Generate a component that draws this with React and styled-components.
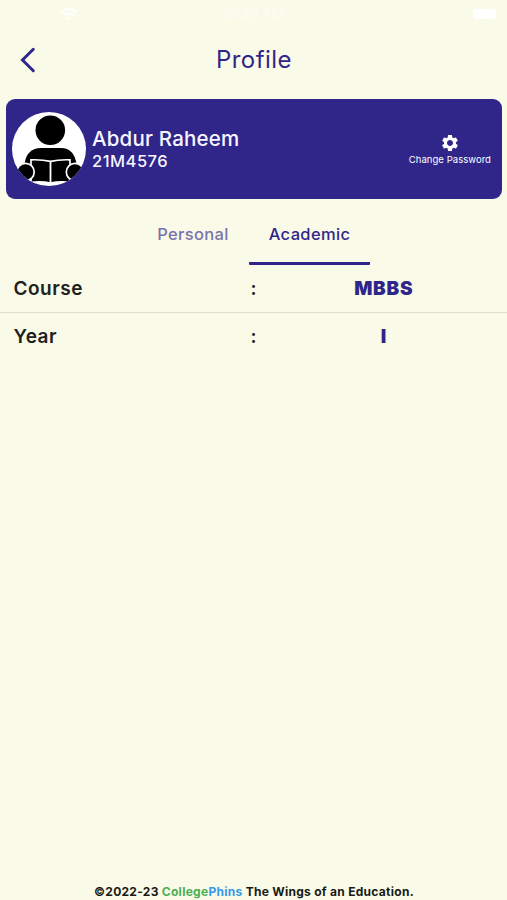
import React from "react";
import styled, { createGlobalStyle } from "styled-components";

const GlobalStyle = createGlobalStyle`
  * {
    box-sizing: border-box;
  }

  body {
    margin: 0;
    background: #f9fae7;
    color: #20211c;
    font-family: Inter, "Liberation Sans", sans-serif;
  }
`;

const Screen = styled.div`
  display: flex;
  flex-direction: column;
  height: 900px;
  overflow: hidden;
`;

const StatusBar = styled.div`
  display: grid;
  grid-template-columns: 1fr auto 1fr;
  align-items: center;
  height: 27px;
  padding: 0 11px;
  color: #fdfdf5;
  font-size: 14px;
`;

const Carrier = styled.div`
  display: flex;
  align-items: center;
  gap: 6px;
  font-size: 13px;
  color: #fbfbee;
`;

const Battery = styled.div`
  justify-self: end;
  width: 23px;
  height: 10px;
  border-radius: 3px;
  background: #fff;
`;

const Header = styled.header`
  display: grid;
  grid-template-columns: 60px 1fr 60px;
  align-items: center;
  height: 65px;
`;

const BackButton = styled.button`
  display: flex;
  padding: 0 0 0 20px;
  border: 0;
  background: none;
`;

const Title = styled.h1`
  margin: 0;
  padding-left: 1px;
  color: #30268a;
  font-size: 24px;
  font-weight: 400;
  line-height: 30px;
  letter-spacing: 0.45px;
  text-align: center;
`;

const Card = styled.section`
  display: flex;
  align-items: center;
  height: 100px;
  margin: 6.6px 5px 0 6px;
  padding: 0 11px 0 6px;
  border-radius: 9px;
  background: #30268a;
  color: #f7f5ff;
`;

const Identity = styled.div`
  flex: 1;
  margin-left: 6px;
`;

const Name = styled.div`
  font-size: 20.5px;
  font-weight: 500;
  line-height: 24px;
  letter-spacing: 0.2px;
`;

const RollNumber = styled.div`
  font-size: 16.5px;
  font-weight: 500;
  line-height: 20px;
  letter-spacing: 0.5px;
`;

const PasswordButton = styled.button`
  display: flex;
  flex-direction: column;
  align-items: center;
  padding: 2px 0 0;
  border: 0;
  background: none;
  color: #fff;
  font: 400 9.5px/14px Inter, sans-serif;
  letter-spacing: 0.05px;
`;

const Tabs = styled.nav`
  display: flex;
  justify-content: center;
  height: 66.4px;
`;

const Tab = styled.button`
  width: ${(props) => props.$width}px;
  padding: 7px 0 0;
  border: 0;
  border-bottom: 3px solid ${(props) => (props.$active ? "#30268a" : "transparent")};
  border-radius: 1px;
  background: none;
  color: ${(props) => (props.$active ? "#30268a" : "#7a73ad")};
  font: 500 16.5px/20px Inter, sans-serif;
  letter-spacing: 0.35px;
`;

const Row = styled.div`
  display: grid;
  grid-template-columns: 237px 10px 1fr;
  align-items: center;
  height: ${(props) => (props.$last ? "47px" : "48px")};
  padding: 0 0 0 13.5px;
  border-bottom: ${(props) => (props.$last ? "0" : "1px solid #dcddcb")};
  font-size: 19px;
  font-weight: 600;
  letter-spacing: 0.5px;
`;

const Value = styled.span`
  color: #30268a;
  font-weight: 900;
  letter-spacing: 0.7px;
  text-align: center;
`;

const Footer = styled.footer`
  margin-top: auto;
  padding: 0 0 1px 1px;
  color: #191a16;
  font-size: 12px;
  font-weight: 700;
  line-height: 15px;
  letter-spacing: 0.28px;
  text-align: center;
`;

const College = styled.span`
  color: #4caf50;
`;

const Phins = styled.span`
  color: #359be8;
`;

const rows = [
  { label: "Course", value: "MBBS" },
  { label: "Year", value: "I" },
];

function WifiIcon() {
  return (
    <svg width="18" height="14" viewBox="0 0 18 14" fill="none" stroke="#fefefa" strokeWidth="2.8">
      <path d="M1 5Q9-1 17 5M4 8.5Q9 4.5 14 8.5" />
      <path d="M6.5 11.2Q9 9.4 11.5 11.2L9 13.5Z" fill="#fefefa" stroke="none" />
    </svg>
  );
}

function Avatar() {
  return (
    <svg width="74" height="74" viewBox="0 0 74 74">
      <defs>
        <clipPath id="avatar-circle">
          <circle cx="37" cy="37" r="37" />
        </clipPath>
      </defs>
      <g clipPath="url(#avatar-circle)">
        <rect width="74" height="74" fill="#fff" />
        <circle cx="38.3" cy="18.3" r="14.8" />
        <path d="M12.5 52C14 41 20 36 29 36H49C58 36 63 42 64.5 52L56 58H21Z" />
        <path
          d="M19 47.8Q30 47.4 38.5 49.3Q47 47.4 58 47.8V70.3Q47 69.3 38.5 71Q30 69.3 19 70.3Z"
          stroke="#fff"
          strokeWidth="1.7"
        />
        <path d="M38.5 49.5V71" stroke="#fff" strokeWidth="1.8" />
        {/* hands holding the book */}
        <circle cx="13.5" cy="60" r="8.7" stroke="#fff" strokeWidth="1.7" />
        <circle cx="63" cy="60" r="8.7" stroke="#fff" strokeWidth="1.7" />
      </g>
    </svg>
  );
}

function GearIcon() {
  return (
    <svg width="20" height="20" viewBox="0 0 24 24" fill="currentColor">
      <path d="M19.14 12.94c.04-.3.06-.61.06-.94 0-.32-.02-.64-.07-.94l2.03-1.58a.49.49 0 0 0 .12-.61l-1.92-3.32a.488.488 0 0 0-.59-.22l-2.39.96c-.5-.38-1.03-.7-1.62-.94l-.36-2.54a.484.484 0 0 0-.48-.41h-3.84c-.24 0-.43.17-.47.41l-.36 2.54c-.59.24-1.13.57-1.62.94l-2.39-.96c-.22-.08-.47 0-.59.22L2.74 8.87c-.12.21-.08.47.12.61l2.03 1.58c-.05.3-.09.63-.09.94s.02.64.07.94l-2.03 1.58a.49.49 0 0 0-.12.61l1.92 3.32c.12.22.37.29.59.22l2.39-.96c.5.38 1.03.7 1.62.94l.36 2.54c.05.24.24.41.48.41h3.84c.24 0 .44-.17.47-.41l.36-2.54c.59-.24 1.13-.56 1.62-.94l2.39.96c.22.08.47 0 .59-.22l1.92-3.32c.12-.22.07-.47-.12-.61l-2.01-1.58zM12 15.6c-1.98 0-3.6-1.62-3.6-3.6s1.62-3.6 3.6-3.6 3.6 1.62 3.6 3.6-1.62 3.6-3.6 3.6z" />
    </svg>
  );
}

function App() {
  return (
    <Screen>
      <GlobalStyle />
      <StatusBar>
        <Carrier>
          Carrier <WifiIcon />
        </Carrier>
        <span>10:20 AM</span>
        <Battery />
      </StatusBar>
      <Header>
        <BackButton aria-label="Back">
          <svg width="16" height="26" viewBox="0 0 16 26" fill="none" stroke="#30268a" strokeWidth="3">
            <path d="M13.3 2.3L2.5 13L13.3 23.7" strokeLinecap="round" />
          </svg>
        </BackButton>
        <Title>Profile</Title>
      </Header>
      <Card>
        <Avatar />
        <Identity>
          <Name>Abdur Raheem</Name>
          <RollNumber>21M4576</RollNumber>
        </Identity>
        <PasswordButton>
          <GearIcon />
          Change Password
        </PasswordButton>
      </Card>
      <Tabs>
        <Tab $width={112}>Personal</Tab>
        <Tab $width={121} $active>
          Academic
        </Tab>
      </Tabs>
      {rows.map((row, index) => (
        <Row key={row.label} $last={index === rows.length - 1}>
          <span>{row.label}</span>
          <span>:</span>
          <Value>{row.value}</Value>
        </Row>
      ))}
      <Footer>
        ©2022-23 <College>College</College>
        <Phins>Phins</Phins> The Wings of an Education.
      </Footer>
    </Screen>
  );
}

export default App;
